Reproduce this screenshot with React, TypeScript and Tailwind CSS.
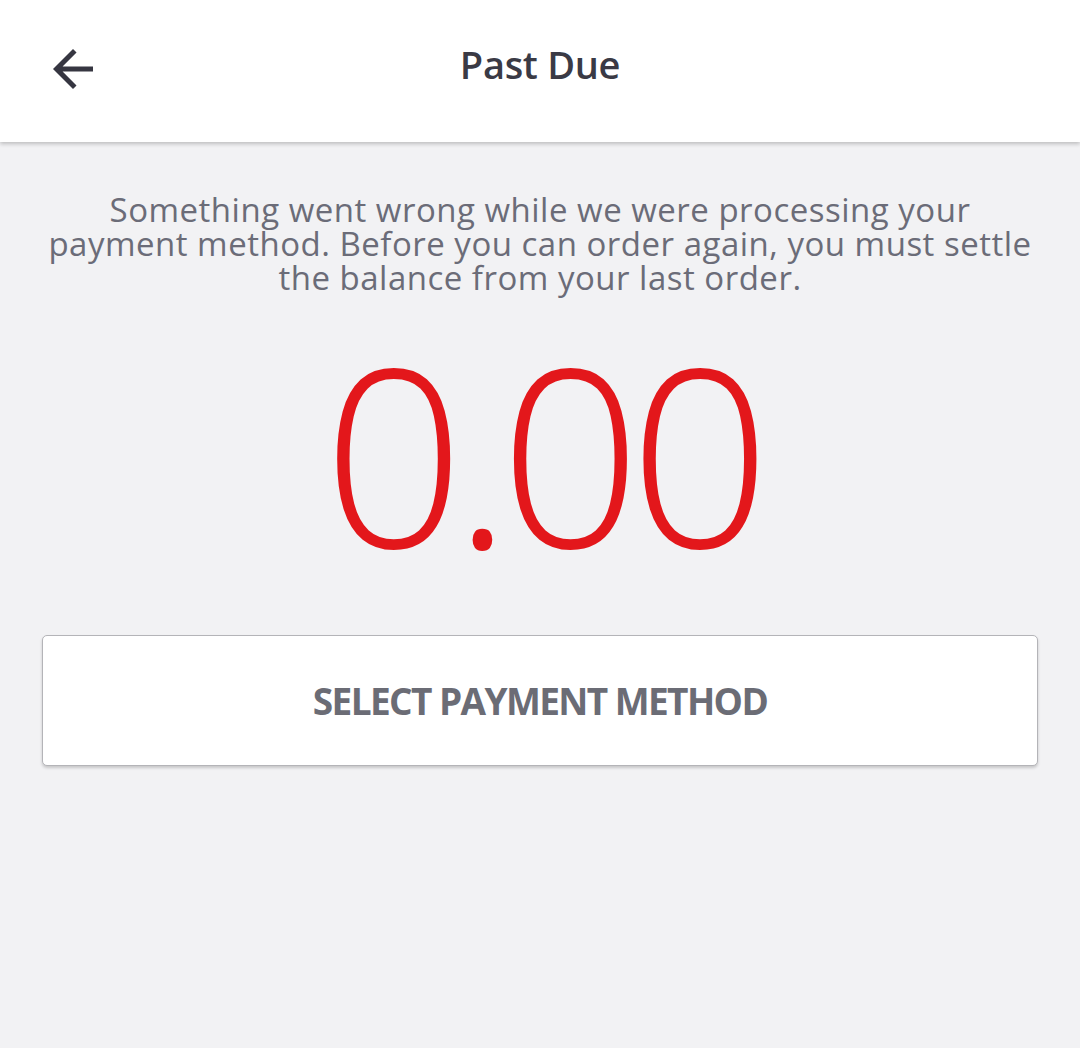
// ── Past Due screen ─────────────────────────────────────────────────────────

function BackArrow() {
  // Material "arrow_back" glyph
  return (
    <svg width="60" height="60" viewBox="0 0 24 24" fill="#363641">
      <path d="M20 11H7.83l5.59-5.59L12 4l-8 8 8 8 1.41-1.41L7.83 13H20v-2z" />
    </svg>
  );
}

export default function App() {
  return (
    <div
      className="min-h-[1048px] w-full bg-[#f2f2f4] flex flex-col"
      style={{ fontFamily: '"Open Sans", "Noto Sans", sans-serif' }}
    >
      {/* Header */}
      <header className="relative h-[142px] bg-white shadow-[0_2px_4px_rgba(0,0,0,0.22)] flex items-center justify-center">
        <button className="absolute left-[43px] top-[39px] w-[60px] h-[60px]">
          <BackArrow />
        </button>
        <h1 className="text-[38px] font-semibold text-[#3a3a45] tracking-[-0.3px] -mt-[14px]">
          Past Due
        </h1>
      </header>

      {/* Body */}
      <main className="flex flex-col items-center px-[42px]">
        <p className="mt-[51px] text-center text-[33px] leading-[34px] text-[#6b6c78] tracking-[0.5px]">
          Something went wrong while we were processing your
          <br />
          payment method. Before you can order again, you must settle
          <br />
          the balance from your last order.
        </p>

        <div className="mt-[32px] text-[248px] leading-[250px] font-light text-[#e3171b] tracking-[-12px] pl-[2px]">
          0.00
        </div>

        <button className="mt-[58px] w-full h-[131px] bg-white border border-[#b4b4b8] rounded-[5px] shadow-[0_2px_3px_rgba(0,0,0,0.18)] flex items-center justify-center">
          <span className="text-[37px] font-bold text-[#6b6c75] tracking-[-1.6px]">
            SELECT PAYMENT METHOD
          </span>
        </button>
      </main>
    </div>
  );
}
